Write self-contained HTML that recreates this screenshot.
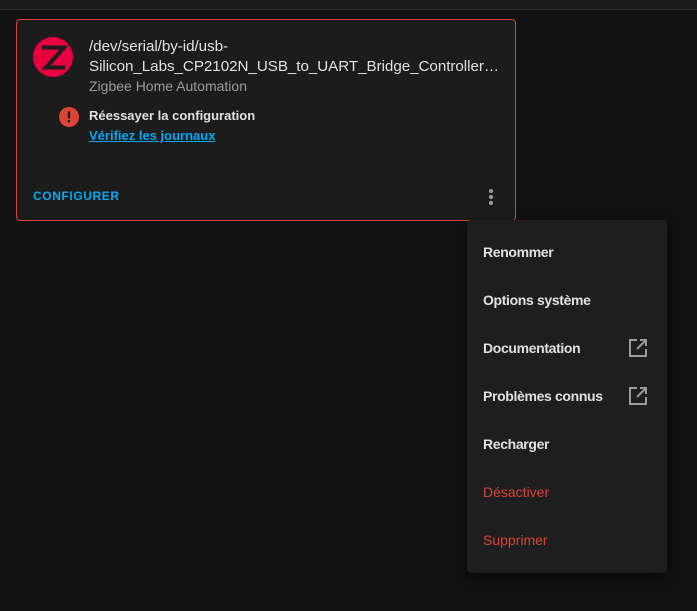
<!DOCTYPE html>
<html><head><meta charset="utf-8"><style>
*{margin:0;padding:0;box-sizing:border-box}
body{width:697px;height:611px;background:#111;font-family:"Liberation Sans",sans-serif;position:relative;overflow:hidden}
.top{position:absolute;left:0;top:0;width:697px;height:10px;background:#1c1c1c;border-bottom:1px solid #2e2e2e}
.card{position:absolute;left:16px;top:19px;width:500px;height:202px;background:#1c1c1c;border:1px solid #db4437;border-radius:4px}
.t{position:absolute;color:#e1e1e1}
.menu{position:absolute;left:467px;top:220px;width:200px;height:353px;background:#1e1e1e;border-radius:4px;box-shadow:0 4px 10px rgba(0,0,0,.5)}
.mi{position:absolute;left:16px;font-size:14px;color:#e1e1e1;font-weight:bold;letter-spacing:-0.35px}
.red{color:#db4437;font-weight:normal;letter-spacing:0}
svg.ext{position:absolute;left:161px}
</style></head><body>
<div class="top"></div>
<div class="card">
 <svg style="position:absolute;left:16px;top:17px" width="40" height="40" viewBox="0 0 40 40"><circle cx="20" cy="20" r="20" fill="#e8003f"/><path d="M9 10.5 H31 L13 30.5 H32" stroke="#1c1c1c" stroke-width="4" fill="none" stroke-linejoin="miter"/></svg>
 <div class="t" style="left:72px;top:17px;font-size:15.2px;line-height:20px;letter-spacing:-0.05px">/dev/serial/by-id/usb-<br>Silicon_Labs_CP2102N_USB_to_UART_Bridge_Controller…</div>
 <div class="t" style="left:72px;top:58px;font-size:14px;color:#9b9b9b">Zigbee Home Automation</div>
 <svg style="position:absolute;left:42px;top:87px" width="20" height="20" viewBox="0 0 20 20"><circle cx="10" cy="10" r="10" fill="#db4437"/><rect x="8.8" y="4.5" width="2.4" height="7" fill="#1c1c1c"/><rect x="8.8" y="13" width="2.4" height="2.4" fill="#1c1c1c"/></svg>
 <div class="t" style="left:72px;top:88px;font-size:13px;font-weight:bold">Réessayer la configuration</div>
 <div class="t" style="left:72px;top:108px;font-size:13px;font-weight:bold;color:#03a9f4;text-decoration:underline">Vérifiez les journaux</div>
 <div class="t" style="left:16px;top:169px;font-size:12px;font-weight:bold;color:#03a9f4;letter-spacing:0.6px">CONFIGURER</div>
 <div style="position:absolute;left:472px;top:169px;width:4px">
  <div style="width:4px;height:4px;border-radius:2px;background:#9b9b9b;margin-bottom:2px"></div>
  <div style="width:4px;height:4px;border-radius:2px;background:#9b9b9b;margin-bottom:2px"></div>
  <div style="width:4px;height:4px;border-radius:2px;background:#9b9b9b"></div>
 </div>
</div>
<div class="menu">
 <div class="mi" style="top:24px">Renommer</div>
 <div class="mi" style="top:72px">Options système</div>
 <div class="mi" style="top:120px">Documentation</div>
 <svg class="ext" style="top:118px" width="20" height="20" viewBox="0 0 20 20"><path d="M9 2H2V18H18V11M12 2H18V8M18 2L9 11" stroke="#9b9b9b" stroke-width="2" fill="none"/></svg>
 <div class="mi" style="top:168px">Problèmes connus</div>
 <svg class="ext" style="top:166px" width="20" height="20" viewBox="0 0 20 20"><path d="M9 2H2V18H18V11M12 2H18V8M18 2L9 11" stroke="#9b9b9b" stroke-width="2" fill="none"/></svg>
 <div class="mi" style="top:216px">Recharger</div>
 <div class="mi red" style="top:264px">Désactiver</div>
 <div class="mi red" style="top:312px">Supprimer</div>
</div>
</body></html>
